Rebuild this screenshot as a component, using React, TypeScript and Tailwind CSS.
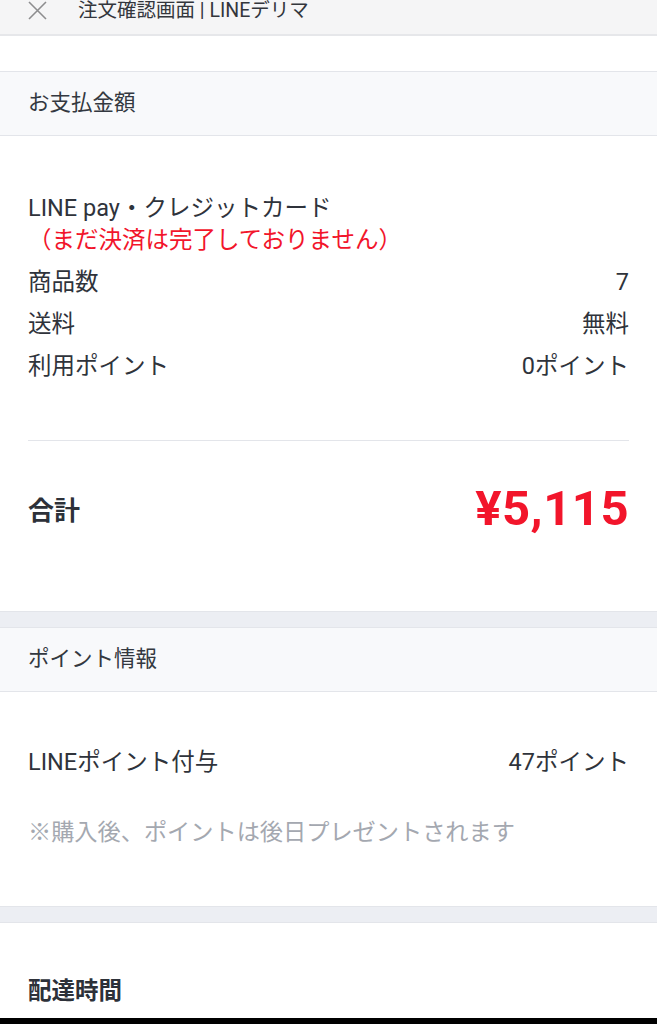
import React from 'react';

const font = { fontFamily: 'Roboto, "Noto Sans CJK JP", sans-serif' };

const SectionHead = ({ title }: { title: string }) => (
  <div className="h-[65px] flex items-center px-7 bg-[#f8f9fb] border-y border-[#e3e5ea]">
    <span className="text-[21.5px] text-[#333840]">{title}</span>
  </div>
);

const Row = ({ label, value }: { label: string; value: string }) => (
  <div className="flex justify-between items-center h-[42px] text-[23.5px] text-[#2f333b]">
    <span>{label}</span>
    <span>{value}</span>
  </div>
);

const App = () => {
  return (
    <div className="w-[657px] h-[1024px] overflow-hidden bg-white flex flex-col" style={font}>
      {/* header (partly scrolled off) */}
      <div className="h-[36px] shrink-0 flex items-start gap-[31px] pl-[28px] pt-[1px] bg-[#f5f5f6] border-b-2 border-[#e6e7ea]">
        <svg width="19" height="19" viewBox="0 0 19 19">
          <path d="M1 1 L18 18 M18 1 L1 18" stroke="#8d8d8f" strokeWidth="1.6" fill="none" />
        </svg>
        <span className="text-[19.5px] leading-[20px] text-[#33363c]">注文確認画面 | LINEデリマ</span>
      </div>

      <div className="h-[35px] shrink-0" />

      <SectionHead title="お支払金額" />

      <div className="px-7 pt-[56px]">
        <div className="text-[23.5px] leading-[32px] text-[#2f333b]">LINE pay・クレジットカード</div>
        <div className="text-[23.5px] leading-[32px] text-[#f2152b]">（まだ決済は完了しておりません）</div>
        <div className="mt-[6px]">
          <Row label="商品数" value="7" />
          <Row label="送料" value="無料" />
          <Row label="利用ポイント" value="0ポイント" />
        </div>
        <div className="mt-[52px] border-t border-[#e3e5ea]" />
        <div className="flex justify-between items-center h-[60px] mt-[38px]">
          <span className="text-[26px] font-bold text-[#2d3139] pt-[4px]">合計</span>
          <span className="text-[49px] font-bold text-[#f2152b] tracking-[0.5px]">¥5,115</span>
        </div>
        <div className="h-[72px]" />
      </div>

      <div className="h-[16px] shrink-0 bg-[#eceef3] border-t border-[#e3e5ea]" />

      <SectionHead title="ポイント情報" />

      <div className="px-7 pt-[55px] pb-[58px]">
        <div className="flex justify-between items-center h-[32px] text-[23.5px] text-[#2f333b]">
          <span>LINEポイント付与</span>
          <span>47ポイント</span>
        </div>
        <div className="mt-[37px] text-[23.2px] leading-[32px] text-[#a4a8b0]">※購入後、ポイントは後日プレゼントされます</div>
      </div>

      <div className="h-[17px] shrink-0 bg-[#eceef3] border-y border-[#e3e5ea]" />

      <div className="px-7 pt-[52px]">
        <div className="text-[23.5px] leading-[32px] font-bold text-[#2d3139]">配達時間</div>
      </div>

      <div className="mt-auto h-[6px] shrink-0 bg-black" />
    </div>
  );
};

export default App;
